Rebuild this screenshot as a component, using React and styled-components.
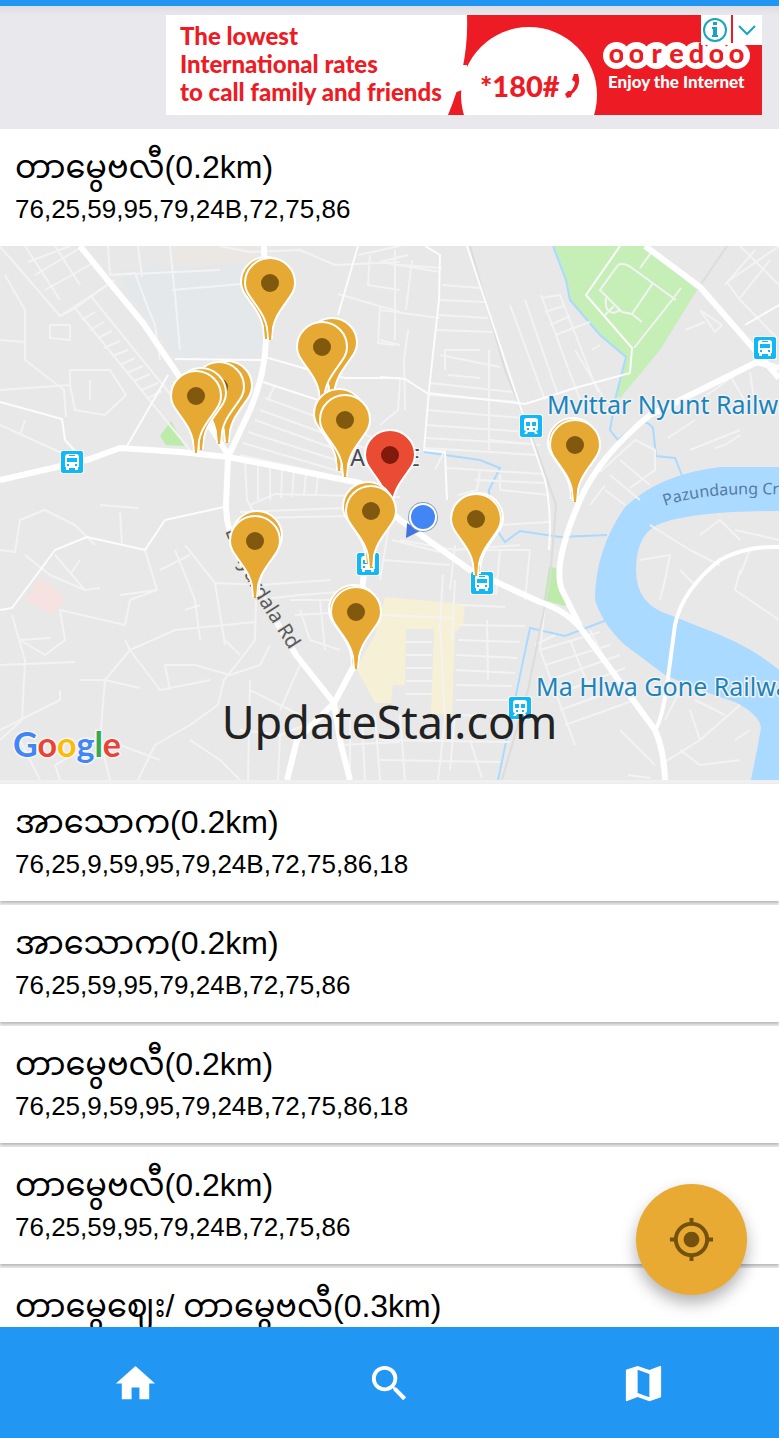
import React from "react";
import styled, { createGlobalStyle } from "styled-components";
import { MdHome, MdSearch, MdMap, MdMyLocation } from "react-icons/md";


const GlobalStyle = createGlobalStyle`
    * { box-sizing: border-box; }
    body {
        margin: 0;
        background: #fff;
        color: #000;
        font-family: "Liberation Sans", "Noto Sans Myanmar", "Noto Sans", sans-serif;
    }
`;

const Page = styled.div`
    display: flex;
    flex-direction: column;
    height: 100vh;
    overflow: hidden;`;

const StatusBar = styled.header`
    flex: none;
    height: 6px;
    background: #2196f3;`;

const AdStrip = styled.aside`
    flex: none;
    display: flex;
    justify-content: flex-end;
    padding: 9px 17px 14px;
    background: linear-gradient(#dedee2, #e8e8ed 10px);`;

const Ad = styled.a`
    position: relative;
    display: grid;
    grid-template-columns: 297px 132px 167px;
    width: 596px;
    height: 100px;
    background: #fff;
    color: #ed1c24;
    font-family: Lato, sans-serif;
    font-weight: 900;
    text-decoration: none;
    overflow: hidden;`;

const AdArt = styled.svg`
    position: absolute;
    inset: 0;`;

const AdCopy = styled.div`
    position: relative;
    padding: 7px 0 0 14px;
    font-size: 24px;
    line-height: 28px;
    white-space: nowrap;`;

const AdCode = styled.div`
    position: relative;
    display: flex;
    align-items: center;
    gap: 4px;
    padding: 42px 0 0 17px;
    font-size: 29px;
    line-height: 30px;`;

const AdBrand = styled.div`
    position: relative;
    display: flex;
    flex-direction: column;
    padding: 27px 0 0 8px;`;

const Brand = styled.div`
    display: flex;`;

const BrandLetter = styled.span`
    width: 27px;
    height: 27px;
    margin-right: -7px;
    border-radius: 50%;
    background: #fff;
    font-size: 27px;
    line-height: 21px;
    text-align: center;`;

const Tagline = styled.div`
    padding-left: 5px;
    color: #fff;
    font-size: 17px;
    line-height: 26px;
    white-space: nowrap;`;

const AdChoices = styled.div`
    position: absolute;
    top: 0;
    right: 0;
    display: flex;
    background: #fff;`;

const Stop = styled.article`
    flex: none;
    display: flex;
    flex-direction: column;
    gap: 6px;
    height: 117px;
    padding: 18px 15px 20px;
    background: #fff;
    box-shadow: ${props => props.$flat ? "none" : "0 2px 3px rgba(0, 0, 0, 0.25)"};`;

const StopName = styled.h2`
    margin: 0;
    font-size: 32px;
    font-weight: 400;
    line-height: 40px;
    white-space: nowrap;`;

const StopLines = styled.p`
    margin: 0;
    font-size: 26px;
    line-height: 33px;`;

const MapBox = styled.section`
    position: relative;
    flex: none;
    height: 534px;
    background: #e8e8e8;`;

const MapArt = styled.svg`
    display: block;
    width: 100%;
    height: 100%;`;

const Watermark = styled.div`
    position: absolute;
    inset: 446px 0 auto;
    color: #222;
    font-family: "Noto Sans", "Open Sans", sans-serif;
    font-size: 45px;
    line-height: 60px;
    text-align: center;`;

const ListArea = styled.main`
    position: relative;
    flex: 1;
    min-height: 0;`;

const List = styled.div`
    display: flex;
    flex-direction: column;
    gap: 4px;
    height: 100%;
    padding-top: 4px;
    background: #f0f0f2;
    overflow-y: auto;
    scrollbar-width: none;`;

const LocateButton = styled.button`
    position: absolute;
    right: 32px;
    bottom: 32px;
    display: flex;
    align-items: center;
    justify-content: center;
    width: 111px;
    height: 111px;
    padding: 0;
    border: 0;
    border-radius: 50%;
    background: #e8aa33;
    color: #74510c;
    box-shadow: 0 8px 16px rgba(0, 0, 0, 0.3);`;

const Nav = styled.nav`
    flex: none;
    display: grid;
    grid-template-columns: repeat(3, 1fr);
    height: 111px;
    padding: 2px 8px 0;
    background: #2196f3;`;

const NavButton = styled.button`
    display: flex;
    align-items: center;
    justify-content: center;
    padding: 0;
    border: 0;
    background: none;
    color: #fff;`;


const stops = [
    { name: "အာသောက(0.2km)", lines: "76,25,9,59,95,79,24B,72,75,86,18" },
    { name: "အာသောက(0.2km)", lines: "76,25,59,95,79,24B,72,75,86" },
    { name: "တာမွေဗလီ(0.2km)", lines: "76,25,9,59,95,79,24B,72,75,86,18" },
    { name: "တာမွေဗလီ(0.2km)", lines: "76,25,59,95,79,24B,72,75,86" },
    { name: "တာမွေဈေး/ တာမွေဗလီ(0.3km)", lines: "76,25,59,95,79,24B,72,75,86" },
];

// pin positions are the centre of the head, drawn back to front
const pins = [
    [266, 282], [270, 283], [332, 343], [322, 347],
    [227, 386], [219, 387], [201, 393], [196, 396],
    [339, 414], [345, 420], [390, 455, "red"], [368, 507], [371, 511],
    [478, 518], [476, 519], [573, 443], [575, 445],
    [257, 536], [255, 541], [354, 610], [356, 612],
];

const stations = [
    [72, 462], [765, 348], [368, 564], [482, 583],
    [531, 426, "train"], [520, 708, "train"],
];

const mainRoads = [
    "M80 246L110 283L143 323L177 373L228 455",
    "M264 246L266 340Q265 375 250 410L228 457L226 505Q226 530 240 560L296 655L334 703L341 745L350 780",
    "M0 480L70 464L90 459L120 448L180 452L228 457L290 469L360 483L400 520L470 570L540 602Q570 612 585 634L655 730Q664 750 665 780",
    "M334 703L356 662L362 590L368 540",
    "M334 703L297 740L287 780",
    "M645 246L700 287L755 350L779 378",
    "M779 368L757 362L650 415Q600 455 580 500Q552 565 562 590L580 626",
];

const midRoads = [
    "M467 246L518 400L545 480Q552 510 549 550",
    "M425 246L440 255L439 300L429 390L424 450L445 452L447 500",
    "M380 377L405 379L427 393L525 404L575 388L630 373L632 348L586 295L620 246",
    "M265 357L310 370L345 378L400 378",
    "M263 382L318 400L365 415",
    "M175 359L262 360",
    "M0 402L62 419L65 440L85 462",
    "M127 446L168 375",
    "M0 610L12 608L55 550L87 537L145 550L165 520L224 507",
    "M358 246L338 315",
    "M745 325L779 305",
];

const minorRoads = [
    "M0 247L12 260L60 316L75 308L110 283",
    "M66 417L64 390L25 360L25 310L5 275",
    "M256 600L255 640L240 660L224 680L218 705L190 725L155 745L138 780",
    "M25 246L60 300M55 246L80 285M35 275L85 245M45 290L95 262M28 262L70 246M60 316L115 280",
    "M75 308L190 450M90 295L175 400M82 320L95 312M90 330L104 322M98 338L112 331M104 348L120 341M112 356L128 350M120 365L135 358M127 373L143 366M134 381L150 374M142 390L158 383M148 398L162 391",
    "M50 325L70 325L70 340L50 338ZM0 340L25 342M70 370L110 370L126 395L105 415L75 410L70 385ZM0 390L70 385M90 380L90 400M25 420L20 435M0 425L66 455",
    "M108 246L110 275L135 273L145 300L155 325L160 360M138 246L142 277M170 246L175 295L180 350M172 290L265 282M110 275L220 270",
    "M220 246L250 252L300 250L335 265L400 262M400 246L358 255M338 294L400 312M370 255L368 285L400 290M380 305L378 343L395 345",
    "M265 398L380 440M260 410L370 450M255 420L366 460M248 432L355 466M243 443L345 473M240 455L330 475M275 385L268 400M400 380L398 410L380 425",
    "M245 462L247 500L255 515M258 465L258 500M270 468L270 500M282 470L281 498M294 472L292 497M306 474L304 495M318 476L316 494M250 505L275 494L400 497M240 512L345 508M252 518L350 516",
    "M400 265L442 268M380 262L440 272M440 355L500 367M442 285L480 288M440 300L485 302M438 315L488 318M436 330L494 332M408 330L404 360L405 410M445 370L445 350L480 350M448 375L480 378M489 350L489 450M430 383L513 392M430 395L520 402M427 410L522 418M426 425L527 432M426 438L532 444M425 448L537 455",
    "M490 440L540 445M480 470L543 474M475 480L546 483M500 490L549 495M447 468L480 470L477 490L458 495M500 525L549 522M500 475L500 490M435 470L445 450",
    "M380 262L408 255M412 260L406 310M380 310L440 318M395 250L395 340M380 340L400 345",
    "M541 295L580 400M510 305L545 400M525 300L558 395M541 298L560 295L598 392M545 312L563 306M550 325L570 316M555 335L590 322M575 350L602 395M592 350L600 345",
    "M618 265Q624 262 632 268L676 300M618 265L600 290L622 312L632 314L653 283M640 268L653 250M606 298Q604 312 614 313L620 310M605 315L614 306M632 314L642 322M681 288L672 300L634 348",
    "M727 282L740 300L779 340M700 310L722 325L715 332L700 310M779 246L727 282M740 246L779 285M685 330L705 322M755 250L725 285M770 260L740 298",
    "M730 375L750 410M750 372L755 405M700 400L735 375M668 438L695 420M690 450L740 430M740 435L725 445L715 448",
    "M600 472L635 440L655 450L655 470L630 488M610 475L640 500M620 460L650 485M605 490L625 505M590 505L605 485",
    "M0 550L15 552L20 520L45 510L75 525L95 545M120 512L122 545M100 505L138 508M25 555L50 575L85 590M55 555L85 590L100 588M80 560L70 575",
    "M145 550L157 590L130 600L125 625L60 610L65 640L45 655L20 640M12 615L25 660L22 720L0 740M0 665L75 662M20 640L50 638M157 590L120 595",
    "M130 650L175 630L255 622M130 650L160 690L210 680M125 640L130 650L105 680L100 740L110 780M105 680L140 688M80 680L105 680M60 690L60 700L0 730",
    "M185 545L215 583L260 585L330 580M160 570L190 555M175 550L195 600L200 640M185 610L200 605M215 583L225 645M225 640L240 655M170 690L165 665L195 665L230 675L260 665L270 645",
    "M256 600L300 595L340 592M300 610L310 640L340 650M320 600L325 650M290 600L345 600M295 615L350 612M300 665L280 710M250 690L300 715M240 730L280 735L330 715M250 680L248 780",
    "M380 580L390 520M400 540L455 550L520 545M384 560L450 565M392 540L440 552M455 545L450 590M470 550L530 550L525 600M500 550L496 595M455 580L452 640",
    "M380 615L455 618M443 575L440 625L445 720L438 780M406 642L432 642M406 655L432 655M406 668L432 668M406 681L432 681M406 694L432 694M460 625L525 626M458 640L520 642M456 655L518 658M456 670L515 673M456 685L512 686M456 700L510 700M455 715L505 716M487 620L488 680M460 605L505 607M400 715L405 780M455 715L450 770M380 740L510 742M380 760L500 762M470 740L482 778",
    "M545 605L540 650L575 745M540 650L600 632M545 665L610 645M550 680L620 655M555 695L625 668M560 710L630 685M565 725L635 700M570 640L590 690M590 630L615 680M535 645L555 635",
    "M620 730L655 765M660 765L700 740L740 705M680 750L700 765L740 760M700 740L690 710M695 700L725 715M628 775L650 778M735 740L750 730M665 720L680 690",
    "M650 525L690 550L720 565M640 560L670 555L665 580L660 600M700 535L720 520L740 540M740 570L735 590L779 620M750 550L740 575M680 570L695 585M779 540L735 530",
    "M350 720L350 780M362 720L365 780M375 715L380 780M340 745L400 742M280 735L278 780M20 740L40 780M100 740L55 765L60 780M120 745L160 760M190 740L220 760L240 780",
];

function Station({ x, y, kind }) {
    return (
        <g transform={`translate(${x - 11} ${y - 11})`}>
            <rect x="-1" y="-1" width="24" height="24" rx="3" fill="#fff" />
            <rect width="22" height="22" rx="2" fill="#12b7f5" />
            {kind === "train" ? (
                <>
                    <path d="M7 3h8q3 0 3 3v8q0 2 -2 2l2 3h-3l-1 -2h-6l-1 2H4l2 -3q-2 0 -2 -2V6q0 -3 3 -3z" fill="#fff" />
                    <path d="M6 7h4v4H6zM12 7h4v4h-4zM7 13h2v2H7zM13 13h2v2h-2z" fill="#12b7f5" />
                </>
            ) : (
                <>
                    <path d="M7 3h8q3 0 3 3v10h-1v3h-3v-2H8v2H5v-3H4V6q0 -3 3 -3z" fill="#fff" />
                    <path d="M6 7h10v4H6zM6 13h2v2H6zM14 13h2v2h-2zM8 4h6v1H8z" fill="#12b7f5" />
                </>
            )}
        </g>
    );
}

function Pin({ x, y, red }) {
    return (
        <g transform={`translate(${x} ${y})`}>
            <path
                d="M-2 55C-2 38 -9 29 -17 18C-22 11 -25 7 -25 0A25 25 0 0 1 25 0C25 7 22 11 17 18C9 29 2 38 2 55Z"
                fill={red ? "#ea4c33" : "#e6a934"}
                stroke="#fff"
                strokeWidth="2"
            />
            <path d="M-1 57L-2 44H2L1 57Z" fill={red ? "#ea4c33" : "#e6a934"} />
            <circle r="9" fill={red ? "#801a0c" : "#80580e"} />
        </g>
    );
}

function StopMap() {
    return (
        <MapArt viewBox="0 246 779 534" preserveAspectRatio="xMidYMid slice" role="img" aria-label="Map of nearby bus stops">
            <rect y="246" width="779" height="534" fill="#e8e8e8" />
            <path d="M120 270L264 262L265 358L178 358L130 295Z" fill="#e4e8ea" />
            <path d="M170 246H255V262L190 268L172 262Z" fill="#eae7e5" />
            <path d="M553 246H645L697 290L660 350L620 398L616 396L626 357L600 335L570 300L566 280Z" fill="#c5efb7" />
            <path d="M171 421L160 436L166 445L185 446ZM549 567L556 568L569 602L565 606L544 600Z" fill="#bcebaa" />
            <path d="M40 577L66 600L52 615L26 600Z" fill="#f6e3e1" />
            <path d="M385 597L465 604L463 625L455 632L452 714H431L434 629H406L405 685H393L391 703H375L356 668L375 635Z" fill="#f6f0d6" />
            <path
                d="M779 467H720Q660 474 625 507Q595 550 595 600Q603 625 625 645L665 675L700 690L735 702Q760 715 761 728L757 750L751 780H779V670Q750 645 700 627L670 615Q636 605 636 570Q636 530 665 522Q700 511 779 511Z"
                fill="#aadaff"
            />
            <g fill="none" stroke="#aadaff" strokeWidth="2">
                <path d="M553 246L566 280L570 300L600 335L626 357L616 396L610 430L618 440L635 425Q645 418 653 428L656 456L675 458L683 478" />
                <path d="M424 452L480 460L500 468L489 490L490 520L505 542L520 531L560 537L607 535M498 780L530 628L565 636L607 620" />
            </g>
            <g fill="none" stroke="#f3f3f3" strokeWidth="2" strokeLinejoin="round">
                {minorRoads.map(d => <path key={d} d={d} />)}
            </g>
            <path d="M470 246L505 370L535 445L556 505L550 580L528 690L502 780M727 246L697 290" fill="none" stroke="#dcdcdc" strokeWidth="2" />
            <g fill="none" stroke="#fcfcfc" strokeWidth="2" strokeLinejoin="round">
                {midRoads.map(d => <path key={d} d={d} />)}
            </g>
            <path d="M779 547Q745 546 720 560Q682 590 675 625L667 685Q662 720 655 730" fill="none" stroke="#fff" strokeWidth="4" />
            <g fill="none" stroke="#fff" strokeWidth="6" strokeLinejoin="round">
                {mainRoads.map(d => <path key={d} d={d} />)}
            </g>

            <path id="road-label" d="M225 531L237 560L254 594L296 660" fill="none" />
            <path id="creek-label" d="M665 506Q705 491 790 495" fill="none" />
            <g fontFamily="Noto Sans, sans-serif" stroke="#f2f2f2" strokeWidth="3" paintOrder="stroke" strokeLinejoin="round">
                <text fontSize="20" fill="#5a5a5a" stroke="#e8e8e8"><textPath href="#road-label">Banyardala Rd</textPath></text>
                <text fontSize="16" fill="#557ba5" stroke="none"><textPath href="#creek-label">Pazundaung Creek</textPath></text>
                <text x="339" y="466" fontSize="23" fill="#454c54">TAMWE</text>
                <text x="547" y="414" fontSize="25" fill="#1a84bd">Mvittar Nyunt Railway</text>
                <text x="536" y="696" fontSize="25" fill="#1a84bd">Ma Hlwa Gone Railway</text>
            </g>

            {stations.map(([x, y, kind]) => <Station key={`${x}-${y}`} x={x} y={y} kind={kind} />)}
            {pins.map(([x, y, red]) => <Pin key={`${x}-${y}`} x={x} y={y} red={red} />)}

            <path d="M407 523L420 531L406 538Z" fill="#4374e0" />
            <circle cx="423" cy="517" r="15" fill="#8d9db8" />
            <circle cx="423" cy="517" r="14" fill="#fff" />
            <circle cx="423" cy="517" r="12" fill="#4285f4" />

            <text x="13" y="757" fontFamily="Lato, sans-serif" fontSize="34" fontWeight="700" stroke="#f6f6f6" strokeWidth="3" paintOrder="stroke">
                <tspan fill="#4285f4">G</tspan>
                <tspan fill="#ea4335">o</tspan>
                <tspan fill="#fbbc05">o</tspan>
                <tspan fill="#4285f4">g</tspan>
                <tspan fill="#34a853">l</tspan>
                <tspan fill="#ea4335">e</tspan>
            </text>
        </MapArt>
    );
}

function Banner() {
    return (
        <Ad href="#ad">
            <AdArt width="596" height="100" viewBox="0 0 596 100" aria-hidden="true">
                <path d="M301 0H596V100H282Q303 50 301 0Z" fill="#ed1c24" />
                <circle cx="363" cy="80" r="68" fill="#fff" />
                <path d="M294 50H301V62L296 75L288 78Z" fill="#fff" />
            </AdArt>
            <AdCopy>
                The lowest<br />
                International rates<br />
                to call family and friends
            </AdCopy>
            <AdCode>
                *180#
                <svg width="16" height="26" viewBox="0 0 16 26" aria-hidden="true">
                    <path d="M10 1l4 0q4 12 -6 20l-1 3l-4 1l-2 -4l3 -3l3 0q4 -5 4 -9l-3 -2z" fill="#ed1c24" />
                </svg>
            </AdCode>
            <AdBrand>
                <Brand>
                    {"ooredoo".split("").map((letter, i) => <BrandLetter key={i}>{letter}</BrandLetter>)}
                </Brand>
                <Tagline>Enjoy the Internet</Tagline>
            </AdBrand>
            <AdChoices>
                <svg width="61" height="30" viewBox="0 0 61 30" aria-hidden="true">
                    <circle cx="14" cy="15" r="11" fill="none" stroke="#18a5c0" strokeWidth="2" />
                    <path d="M11 12h5v8h1v2h-6v-2h1v-6h-1zM12 7h4v3h-4z" fill="#18a5c0" />
                    <path d="M30 0h2v28h-2z" fill="#ed1c24" />
                    <path d="M38 11l8 8 8 -8" fill="none" stroke="#18a5c0" strokeWidth="2" />
                </svg>
            </AdChoices>
        </Ad>
    );
}

function App() {
    return (
        <Page>
            <GlobalStyle />
            <StatusBar />
            <AdStrip>
                <Banner />
            </AdStrip>
            <Stop $flat>
                <StopName>တာမွေဗလီ(0.2km)</StopName>
                <StopLines>76,25,59,95,79,24B,72,75,86</StopLines>
            </Stop>
            <MapBox>
                <StopMap />
                <Watermark>UpdateStar.com</Watermark>
            </MapBox>
            <ListArea>
                <List>
                    {stops.map((stop, i) => (
                        <Stop key={i}>
                            <StopName>{stop.name}</StopName>
                            <StopLines>{stop.lines}</StopLines>
                        </Stop>
                    ))}
                </List>
                <LocateButton aria-label="My location">
                    <MdMyLocation size={47} />
                </LocateButton>
            </ListArea>
            <Nav>
                <NavButton aria-label="Home"><MdHome size={47} /></NavButton>
                <NavButton aria-label="Search"><MdSearch size={47} /></NavButton>
                <NavButton aria-label="Map"><MdMap size={47} /></NavButton>
            </Nav>
        </Page>
    );
}

export default App;
